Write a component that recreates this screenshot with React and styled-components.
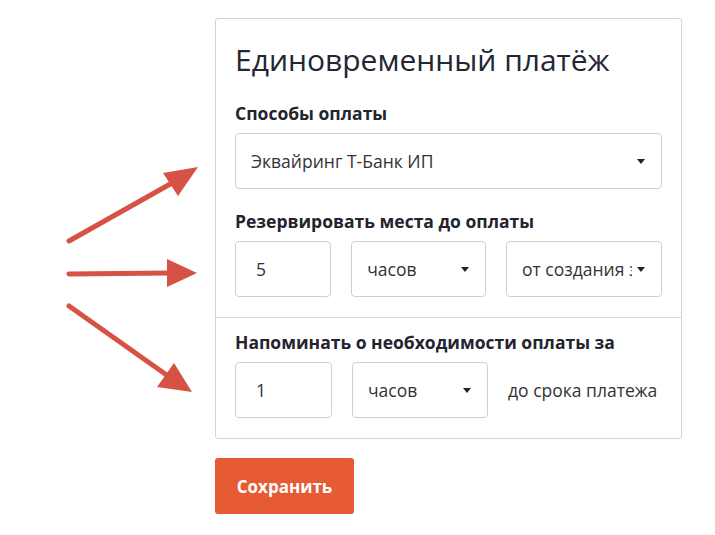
import React from "react";
import styled, { createGlobalStyle } from "styled-components";

const GlobalStyle = createGlobalStyle`
  body {
    margin: 0;
    background: #ffffff;
    font-family: "Open Sans", "Noto Sans", sans-serif;
    color: #212529;
  }
`;

const Page = styled.div`
  display: flex;
  width: 715px;
  min-height: 535px;
`;

const ArrowPanel = styled.svg`
  flex: 0 0 215px;
  width: 215px;
  height: 535px;
`;

const Column = styled.div`
  width: 467px;
  padding-top: 18px;
  display: flex;
  flex-direction: column;
  align-items: flex-start;
`;

const Card = styled.div`
  width: 100%;
  box-sizing: border-box;
  border: 1px solid #d3d3d3;
  border-radius: 3px;
`;

const Section = styled.div`
  padding: ${(p) => p.$pad};
  border-top: ${(p) => (p.$divided ? "1px solid #d9d9d9" : "none")};
`;

const Title = styled.h2`
  margin: 0 0 23px 0;
  font-size: 30px;
  line-height: 36px;
  font-weight: 400;
  color: #232633;
`;

const Field = styled.div`
  margin-bottom: ${(p) => p.$gap || "0"};
`;

const Label = styled.div`
  font-size: 17.5px;
  line-height: 24px;
  font-weight: 700;
  color: #23242e;
  margin-bottom: 8px;
`;

const Row = styled.div`
  display: flex;
  align-items: center;
  gap: 20px;
`;

const Box = styled.div`
  box-sizing: border-box;
  width: ${(p) => p.$w};
  height: 56px;
  border: 1px solid #cfcfcf;
  border-radius: 4px;
  padding: 0 ${(p) => p.$pr || "15px"} 0 ${(p) => p.$pl || "15px"};
  display: flex;
  align-items: center;
  position: relative;
  font-size: 17.5px;
  color: #333;
  background: #fff;
`;

const BoxText = styled.span`
  white-space: nowrap;
  overflow: hidden;
`;

const Caret = styled.span`
  position: absolute;
  right: 16px;
  top: 50%;
  margin-top: -2px;
  width: 0;
  height: 0;
  border-left: 4px solid transparent;
  border-right: 4px solid transparent;
  border-top: 5px solid #222;
`;

const Hint = styled.span`
  font-size: 17.5px;
  color: #333;
`;

const SaveButton = styled.button`
  margin-top: 19px;
  width: 139px;
  height: 56px;
  border: none;
  border-radius: 3px;
  background: #e65b34;
  color: #fff;
  font-family: "Open Sans", "Noto Sans", sans-serif;
  font-size: 17px;
  font-weight: 700;
  cursor: pointer;
`;

function Select({ width, children, pr }) {
  return (
    <Box $w={width} $pr={pr || "30px"}>
      <BoxText>{children}</BoxText>
      <Caret />
    </Box>
  );
}

function Arrows() {
  const c = "#d55244";
  return (
    <ArrowPanel viewBox="0 0 215 535">
      <line x1="69" y1="241" x2="172" y2="183" stroke={c} strokeWidth="5" strokeLinecap="round" />
      <polygon points="198,167 163,173 178,196" fill={c} />
      <line x1="69" y1="274" x2="170" y2="273" stroke={c} strokeWidth="5" strokeLinecap="round" />
      <polygon points="197,273 167,259 167,287" fill={c} />
      <line x1="69" y1="306" x2="168" y2="376" stroke={c} strokeWidth="5" strokeLinecap="round" />
      <polygon points="192,392 174,363 157,387" fill={c} />
    </ArrowPanel>
  );
}

export default function App() {
  return (
    <>
      <GlobalStyle />
      <Page>
        <Arrows />
        <Column>
          <Card>
            <Section $pad="23px 19px 20px 19px">
              <Title>Единовременный платёж</Title>
              <Field $gap="20px">
                <Label>Способы оплаты</Label>
                <Select width="427px">Эквайринг Т-Банк ИП</Select>
              </Field>
              <Field>
                <Label>Резервировать места до оплаты</Label>
                <Row>
                  <Box $w="97px" $pl="20px">5</Box>
                  <Select width="136px">часов</Select>
                  <Select width="156px" pr="29px">от создания заказа</Select>
                </Row>
              </Field>
            </Section>
            <Section $divided $pad="12px 19px 20px 19px">
              <Field>
                <Label>Напоминать о необходимости оплаты за</Label>
                <Row>
                  <Box $w="97px" $pl="20px">1</Box>
                  <Select width="136px">часов</Select>
                  <Hint>до срока платежа</Hint>
                </Row>
              </Field>
            </Section>
          </Card>
          <SaveButton>Сохранить</SaveButton>
        </Column>
      </Page>
    </>
  );
}
